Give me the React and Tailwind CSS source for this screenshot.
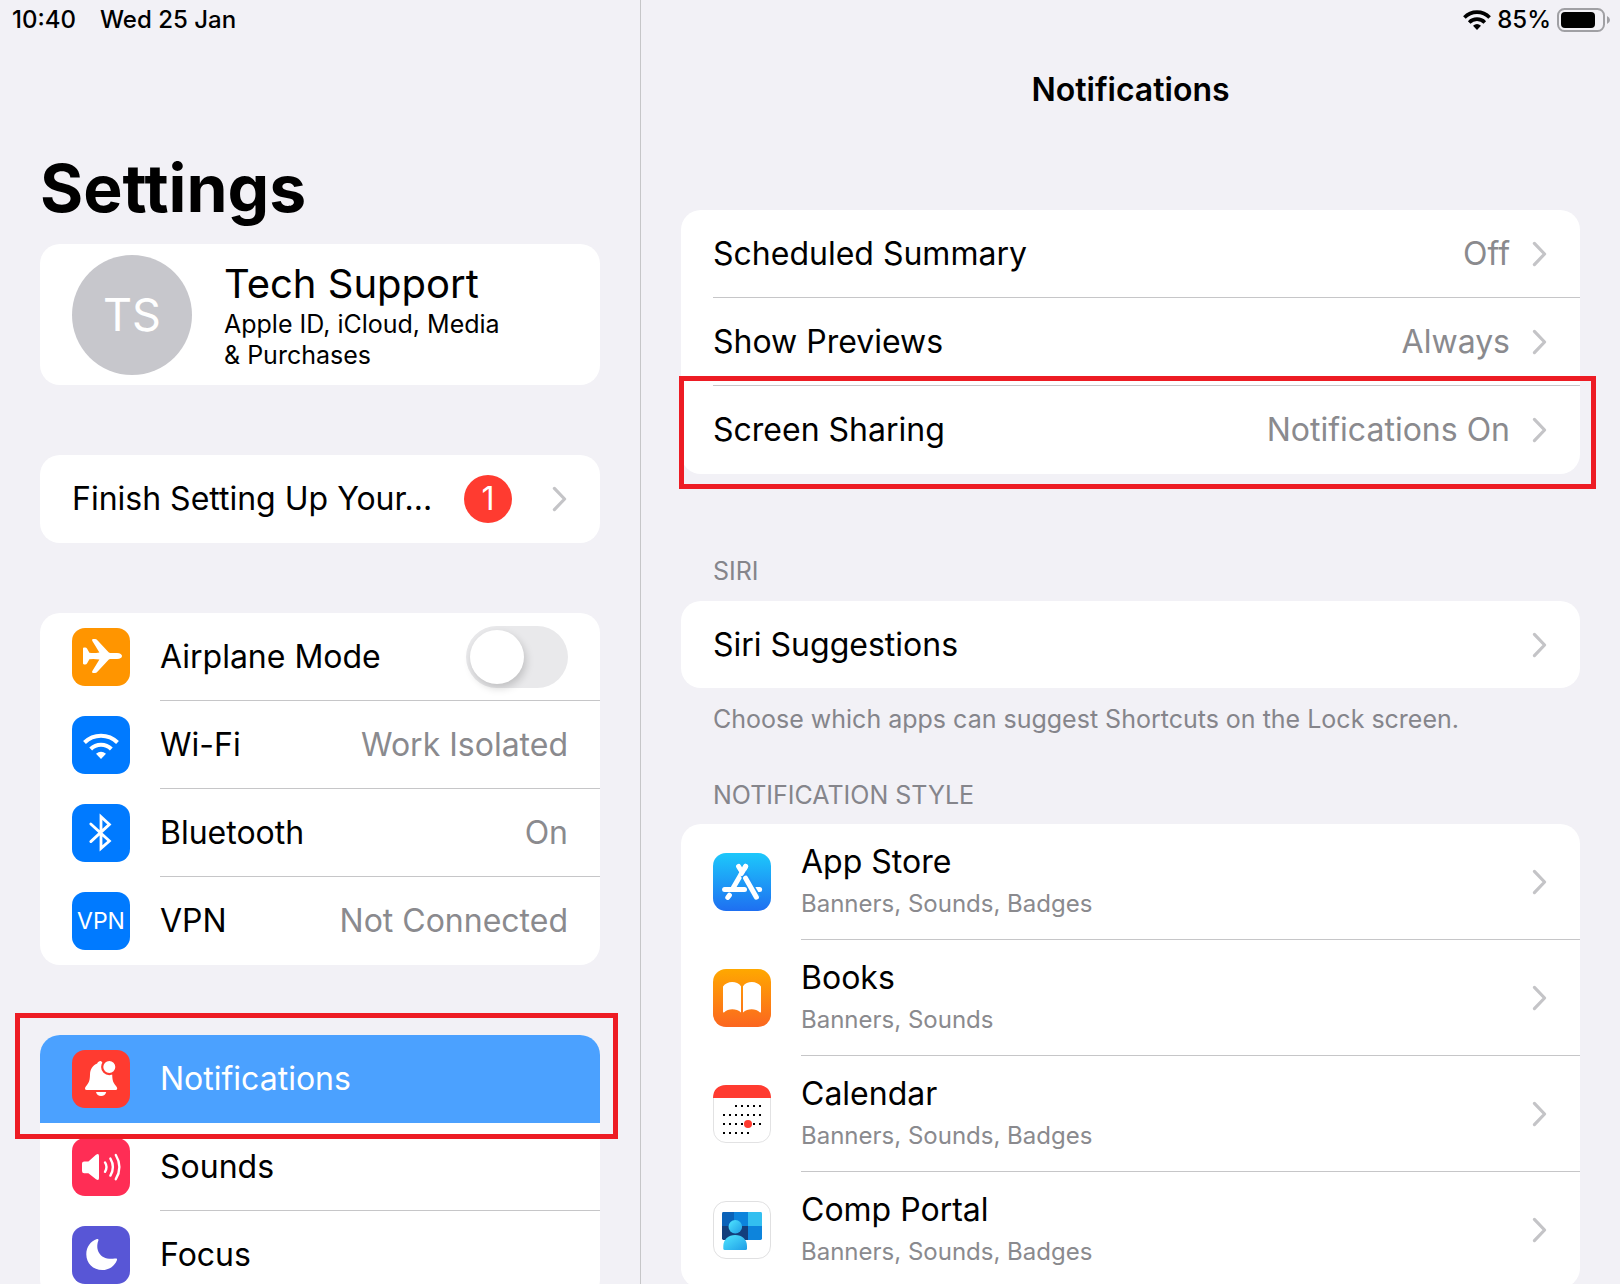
import clsx from "clsx";

function AirplaneIcon() {
  return (
    <svg viewBox="0 0 58 58" className="size-full" fill="#fff">
      <path d="M11 20.4Q11 19.6 12 19.6H13.2Q14.4 19.6 15 20.6L17.4 24.8Q22 25.6 27.4 24.4L20.2 12.8Q19.4 11 21.2 11H23Q24.4 11 25.4 12.2L36.6 24.2Q37.2 24.9 38.4 24.9H45Q50 25.3 50 28Q50 30.7 45 31.1H38.4Q37.2 31.1 36.6 31.8L25.4 43.8Q24.4 45 23 45H21.2Q19.4 45 20.2 43.2L27.4 31.6Q22 30.4 17.4 31.2L15 35.4Q14.4 36.4 13.2 36.4H12Q11 36.4 11 35.6Z" />
    </svg>
  );
}

function WifiIcon() {
  return (
    <svg viewBox="0 0 58 58" className="size-full" fill="none" stroke="#fff" strokeWidth="4">
      <path d="M12.5 26.5A23.5 23.5 0 0 1 45.5 26.5" />
      <path d="M18.7 33A14.5 14.5 0 0 1 39.3 33" />
      <path d="M29 43L24 37.8Q29 33.6 34 37.8Z" fill="#fff" stroke="none" />
    </svg>
  );
}

function BluetoothIcon() {
  return (
    <svg viewBox="0 0 58 58" className="size-full" fill="none" stroke="#fff" strokeWidth="2.8" strokeLinecap="round" strokeLinejoin="miter">
      <path d="M18.8 20L37.4 37L29 44.4V12.6L37.4 20.4L18.8 37.6" />
    </svg>
  );
}

function BellIcon() {
  return (
    <svg viewBox="0 0 58 58" className="size-full" fill="#fff">
      <path d="M29 11C26.5 11 25.4 12.6 25.2 13.6C20.5 15.6 18.2 19.4 18 24.5C17.8 30 17.4 32.2 14.6 35.4C13.4 36.8 13 37.6 13 38.4Q13 40 14.8 40H43.4Q45.2 40 45.2 38.4C45.2 37.6 44.8 36.8 43.6 35.4C40.8 32.2 40.4 30 40.2 24.5L29 11Z" />
      <path d="M24 42H34.2C33.6 44.6 31.8 46 29.1 46S24.6 44.6 24 42Z" />
      <circle cx="37.3" cy="17" r="7.1" stroke="#ff3b30" strokeWidth="2.2" />
    </svg>
  );
}

function SpeakerIcon() {
  return (
    <svg viewBox="0 0 58 58" className="size-full" fill="none" stroke="#fff" strokeWidth="2.4" strokeLinecap="round">
      <path d="M12.2 23.4H16.4L24 16.8Q27 14.8 27 18V40Q27 43.2 24 41.2L16.4 35.2H12.2Q10 35.2 10 33V25.6Q10 23.4 12.2 23.4Z" fill="#fff" stroke="none" />
      <path d="M33 24.4Q36 29 33 33.8M38.4 20.6Q43.4 29 38.4 37.6M43.8 17Q51 29 43.8 41.2" />
    </svg>
  );
}

function MoonIcon() {
  return (
    <svg viewBox="0 0 58 58" className="size-full" fill="#fff">
      <path d="M25 13.1C26.2 12.7 26.8 13.5 26.3 14.7C22.8 24 28.4 34.6 42.6 32.6C44.6 32.2 45.6 32.6 44.9 34.2C42.4 40.2 37 44 30.4 44C21 44 14.3 37.2 14.3 28.2C14.3 21.2 18.6 15.2 25 13.1Z" />
    </svg>
  );
}

function AppStoreIcon() {
  return (
    <svg viewBox="0 0 58 58" className="size-full">
      <defs>
        <linearGradient id="store" x1="0" y1="0" x2="0" y2="1">
          <stop offset="0" stopColor="#1dc8fb" />
          <stop offset="1" stopColor="#1e6ff1" />
        </linearGradient>
      </defs>
      <rect width="58" height="58" rx="13" fill="url(#store)" />
      <g fill="none" stroke="#fff" strokeWidth="5" strokeLinecap="round">
        <path d="M32.6 13.4L20.4 34.4" />
        <path d="M11.6 36.4H31.5" />
        <path d="M41 36.4H46.6" />
        <path d="M16.4 42.2L14.8 44.4" />
      </g>
      <path d="M27.6 15.5L44.6 45.4" stroke="#1f96f7" strokeWidth="7.4" />
      <g fill="none" stroke="#fff" strokeWidth="5" strokeLinecap="round">
        <path d="M25.6 13.4L28.8 18.8" />
        <path d="M32.6 13.4L28.4 20.6" />
        <path d="M32.6 25.2L43.4 44.2" />
      </g>
    </svg>
  );
}

function BooksIcon() {
  return (
    <svg viewBox="0 0 58 58" className="size-full">
      <defs>
        <linearGradient id="books" x1="0" y1="0" x2="0" y2="1">
          <stop offset="0" stopColor="#ffa800" />
          <stop offset="1" stopColor="#fb6620" />
        </linearGradient>
      </defs>
      <rect width="58" height="58" rx="13" fill="url(#books)" />
      <g fill="#fff">
        <path d="M10 17.6C14 11.6 24 11.6 28 17.2V43.6C23.4 39.4 15.6 39.2 11 43.4Q10 44 10 42.6Z" />
        <path d="M48 17.6C44 11.6 34 11.6 30 17.2V43.6C34.6 39.4 42.4 39.2 47 43.4Q48 44 48 42.6Z" />
      </g>
    </svg>
  );
}

const calendarRows = [
  { y: 21, days: [23, 29, 35, 41, 47] },
  { y: 30, days: [11, 17, 23, 29, 35, 41, 47] },
  { y: 39, days: [11, 17, 23, 29, 35, 41, 47] },
  { y: 48, days: [11, 17, 23, 29, 35] },
];

function CalendarIcon() {
  return (
    <svg viewBox="0 0 58 58" className="size-full">
      <rect x="0.5" y="0.5" width="57" height="57" rx="12.5" fill="#fff" stroke="#e2e2e3" />
      <path d="M0 13C0 5 5 0 13 0H45C53 0 58 5 58 13Z" fill="#ff3b30" />
      {calendarRows.map((row) =>
        row.days.map((x) => (
          <rect key={x + "-" + row.y} x={x - 1} y={row.y - 1} width="2" height="2" />
        ))
      )}
      <circle cx="35" cy="39" r="4" fill="#ff3b30" />
    </svg>
  );
}

function PortalIcon() {
  return (
    <svg viewBox="0 0 58 58" className="size-full">
      <defs>
        <linearGradient id="person" x1="0" y1="0" x2="1" y2="1">
          <stop offset="0" stopColor="#50e6ff" />
          <stop offset="1" stopColor="#1f9de6" />
        </linearGradient>
        <clipPath id="screen">
          <rect x="9" y="11" width="40" height="28" rx="1.4" />
        </clipPath>
      </defs>
      <rect x="0.5" y="0.5" width="57" height="57" rx="12.5" fill="#fff" stroke="#e0e0e1" />
      <g clipPath="url(#screen)">
        <rect x="9" y="11" width="12" height="14" fill="#0a62b8" />
        <rect x="21" y="11" width="14" height="14" fill="#0c84dc" />
        <rect x="35" y="11" width="14" height="14" fill="#33bff0" />
        <rect x="9" y="25" width="26" height="14" fill="#133f7c" />
        <rect x="35" y="25" width="14" height="14" fill="#0d84dc" />
      </g>
      <circle cx="22.3" cy="25.7" r="6.8" fill="url(#person)" />
      <path d="M10.3 47.5V45C10.3 38.5 15.4 34 22.2 34S34 38.5 34 45V47.5Q34 49 32.5 49H11.8Q10.3 49 10.3 47.5Z" fill="url(#person)" />
    </svg>
  );
}

function Chevron() {
  return (
    <svg viewBox="0 0 16 26" className="h-[26px] w-4 shrink-0" fill="none" stroke="#c4c4c7" strokeWidth="3.2" strokeLinecap="round" strokeLinejoin="round">
      <path d="M2.4 2.4L12.6 13L2.4 23.6" />
    </svg>
  );
}

const connections = [
  { name: "Wi-Fi", value: "Work Isolated", color: "bg-[#007aff]", icon: <WifiIcon /> },
  { name: "Bluetooth", value: "On", color: "bg-[#007aff]", icon: <BluetoothIcon /> },
  { name: "VPN", value: "Not Connected", color: "bg-[#007aff]", icon: <span className="text-[23px] text-white">VPN</span> },
];

const general = [
  { name: "Notifications", color: "bg-[#ff3b30]", icon: <BellIcon />, active: true },
  { name: "Sounds", color: "bg-[#ff2d55]", icon: <SpeakerIcon /> },
  { name: "Focus", color: "bg-[#5856d6]", icon: <MoonIcon /> },
];

const options = [
  { name: "Scheduled Summary", value: "Off" },
  { name: "Show Previews", value: "Always" },
  { name: "Screen Sharing", value: "Notifications On", marked: true },
];

const apps = [
  { name: "App Store", detail: "Banners, Sounds, Badges", icon: <AppStoreIcon /> },
  { name: "Books", detail: "Banners, Sounds", icon: <BooksIcon /> },
  { name: "Calendar", detail: "Banners, Sounds, Badges", icon: <CalendarIcon /> },
  { name: "Comp Portal", detail: "Banners, Sounds, Badges", icon: <PortalIcon /> },
];

function Tile({ color, children }) {
  return (
    <span className={clsx("flex size-[58px] shrink-0 items-center justify-center rounded-[13px]", color)}>
      {children}
    </span>
  );
}

function SidebarRow({ item, last }) {
  return (
    <button
      className={clsx(
        "relative flex w-full items-center gap-[30px] pl-8 text-left",
        item.active && "rounded-t-[20px] bg-[#4ba1ff] text-white"
      )}
    >
      <Tile color={item.color}>{item.icon}</Tile>
      <span
        className={clsx(
          "flex h-[88px] flex-1 items-center justify-between border-b pr-8",
          last || item.active ? "border-transparent" : "border-[#c6c6c8]"
        )}
      >
        <span>{item.name}</span>
        <span className="text-[#8a8a8e]">{item.value}</span>
      </span>
      {item.active && (
        <span className="absolute -top-[22px] -right-[18px] -bottom-4 -left-[25px] z-10 border-5 border-[#ed1c24]" />
      )}
    </button>
  );
}

function Sidebar() {
  return (
    <aside className="w-[641px] shrink-0 overflow-hidden border-r border-[#c6c6c8]">
      <div className="flex h-10 items-center gap-6 px-3 text-2xl font-medium">
        <span>10:40</span>
        <span>Wed 25 Jan</span>
      </div>
      <div className="px-10 text-[32px]">
        <h1 className="pt-[108px] pb-4 text-[66px] leading-20 font-bold">Settings</h1>
        <button className="flex h-[141px] w-full items-center gap-8 rounded-[20px] bg-white px-8 text-left">
          <span className="flex size-30 shrink-0 items-center justify-center rounded-full bg-[#c7c7cc] text-[45px] text-white">
            TS
          </span>
          <span className="flex flex-col">
            <span className="text-[40px] leading-[50px]">Tech Support</span>
            <span className="text-[25px] leading-[31px]">
              Apple ID, iCloud, Media
              <br />
              &amp; Purchases
            </span>
          </span>
        </button>

        <button className="mt-[70px] flex h-[88px] w-full items-center rounded-[20px] bg-white px-8 text-left">
          <span className="flex-1 whitespace-nowrap">Finish Setting Up Your...</span>
          <span className="mr-10 flex size-12 items-center justify-center rounded-full bg-[#ff3b30] text-white">
            1
          </span>
          <Chevron />
        </button>

        <div className="mt-[70px] rounded-[20px] bg-white">
          <div className="flex items-center gap-[30px] pl-8">
            <Tile color="bg-[#ff9500]">
              <AirplaneIcon />
            </Tile>
            <label className="flex h-[88px] flex-1 items-center justify-between border-b border-[#c6c6c8] pr-8">
              Airplane Mode
              <input
                type="checkbox"
                role="switch"
                className="h-[62px] w-[102px] appearance-none rounded-full bg-[#e9e9eb] p-1 before:block before:size-[54px] before:rounded-full before:bg-white before:shadow-[2px_4px_8px_rgba(0,0,0,0.18)] checked:bg-[#34c759] checked:before:ml-10"
              />
            </label>
          </div>
          {connections.map((item, i) => (
            <SidebarRow key={item.name} item={item} last={i === connections.length - 1} />
          ))}
        </div>

        <div className="mt-[70px] rounded-[20px] bg-white">
          {general.map((item) => (
            <SidebarRow key={item.name} item={item} />
          ))}
        </div>
      </div>
    </aside>
  );
}

function StatusIcons() {
  return (
    <div className="flex h-10 items-center justify-end gap-[6px] pr-[9px] text-2xl font-medium">
      <svg viewBox="0 0 28 20" className="h-5 w-7" fill="none" stroke="#000" strokeWidth="3.6">
        <path d="M1.4 7.4A17.6 17.6 0 0 1 26.6 7.4" />
        <path d="M6.2 12.4A11 11 0 0 1 21.8 12.4" />
        <path d="M14 20L10 15.8Q14 12.4 18 15.8Z" fill="#000" stroke="none" />
      </svg>
      <span>85%</span>
      <svg viewBox="0 0 54 24" className="h-6 w-[54px]">
        <rect x="1" y="1" width="46" height="22" rx="6.5" fill="none" stroke="#a0a0a4" strokeWidth="2" />
        <rect x="4" y="4" width="34" height="16" rx="4" />
        <path d="M50 8Q53 9.4 53 12T50 16Z" fill="#a0a0a4" />
      </svg>
    </div>
  );
}

function Detail() {
  return (
    <main className="min-w-0 flex-1 overflow-hidden">
      <StatusIcons />
      <div className="px-10 text-[32px]">
        <h2 className="pt-7 text-center leading-11 font-semibold">Notifications</h2>

        <div className="mt-[98px] rounded-[20px] bg-white">
          {options.map((item, i) => (
            <button key={item.name} className="relative block w-full pl-8 text-left">
              <span
                className={clsx(
                  "flex h-[88px] items-center border-b pr-8",
                  i === options.length - 1 ? "border-transparent" : "border-[#c6c6c8]"
                )}
              >
                <span className="flex-1">{item.name}</span>
                <span className="mr-[22px] text-[#8a8a8e]">{item.value}</span>
                <Chevron />
              </span>
              {item.marked && (
                <span className="absolute -top-[10px] -right-4 -bottom-[15px] -left-[2px] border-5 border-[#ed1c24]" />
              )}
            </button>
          ))}
        </div>

        <h3 className="mt-[81px] px-8 pb-[14px] text-[25px] leading-8 text-[#85858b]">SIRI</h3>
        <button className="flex h-[87px] w-full items-center justify-between rounded-[20px] bg-white px-8 text-left">
          Siri Suggestions
          <Chevron />
        </button>
        <p className="px-8 pt-[15px] text-[25px] leading-8 text-[#85858b]">
          Choose which apps can suggest Shortcuts on the Lock screen.
        </p>

        <h3 className="mt-11 px-8 pb-[13px] text-[25px] leading-8 text-[#85858b]">NOTIFICATION STYLE</h3>
        <div className="rounded-[20px] bg-white">
          {apps.map((app) => (
            <button key={app.name} className="flex w-full items-center gap-[30px] pl-8 text-left">
              <Tile>{app.icon}</Tile>
              <span className="flex h-[116px] flex-1 items-center justify-between border-b border-[#c6c6c8] pr-8">
                <span className="flex flex-col">
                  <span className="leading-11">{app.name}</span>
                  <span className="text-2xl leading-10 text-[#8a8a8e]">{app.detail}</span>
                </span>
                <Chevron />
              </span>
            </button>
          ))}
        </div>
      </div>
    </main>
  );
}

export default function App() {
  return (
    <div className="flex h-screen overflow-hidden bg-[#f2f1f6] font-[Inter,'Liberation_Sans',sans-serif] text-black">
      <Sidebar />
      <Detail />
    </div>
  );
}
